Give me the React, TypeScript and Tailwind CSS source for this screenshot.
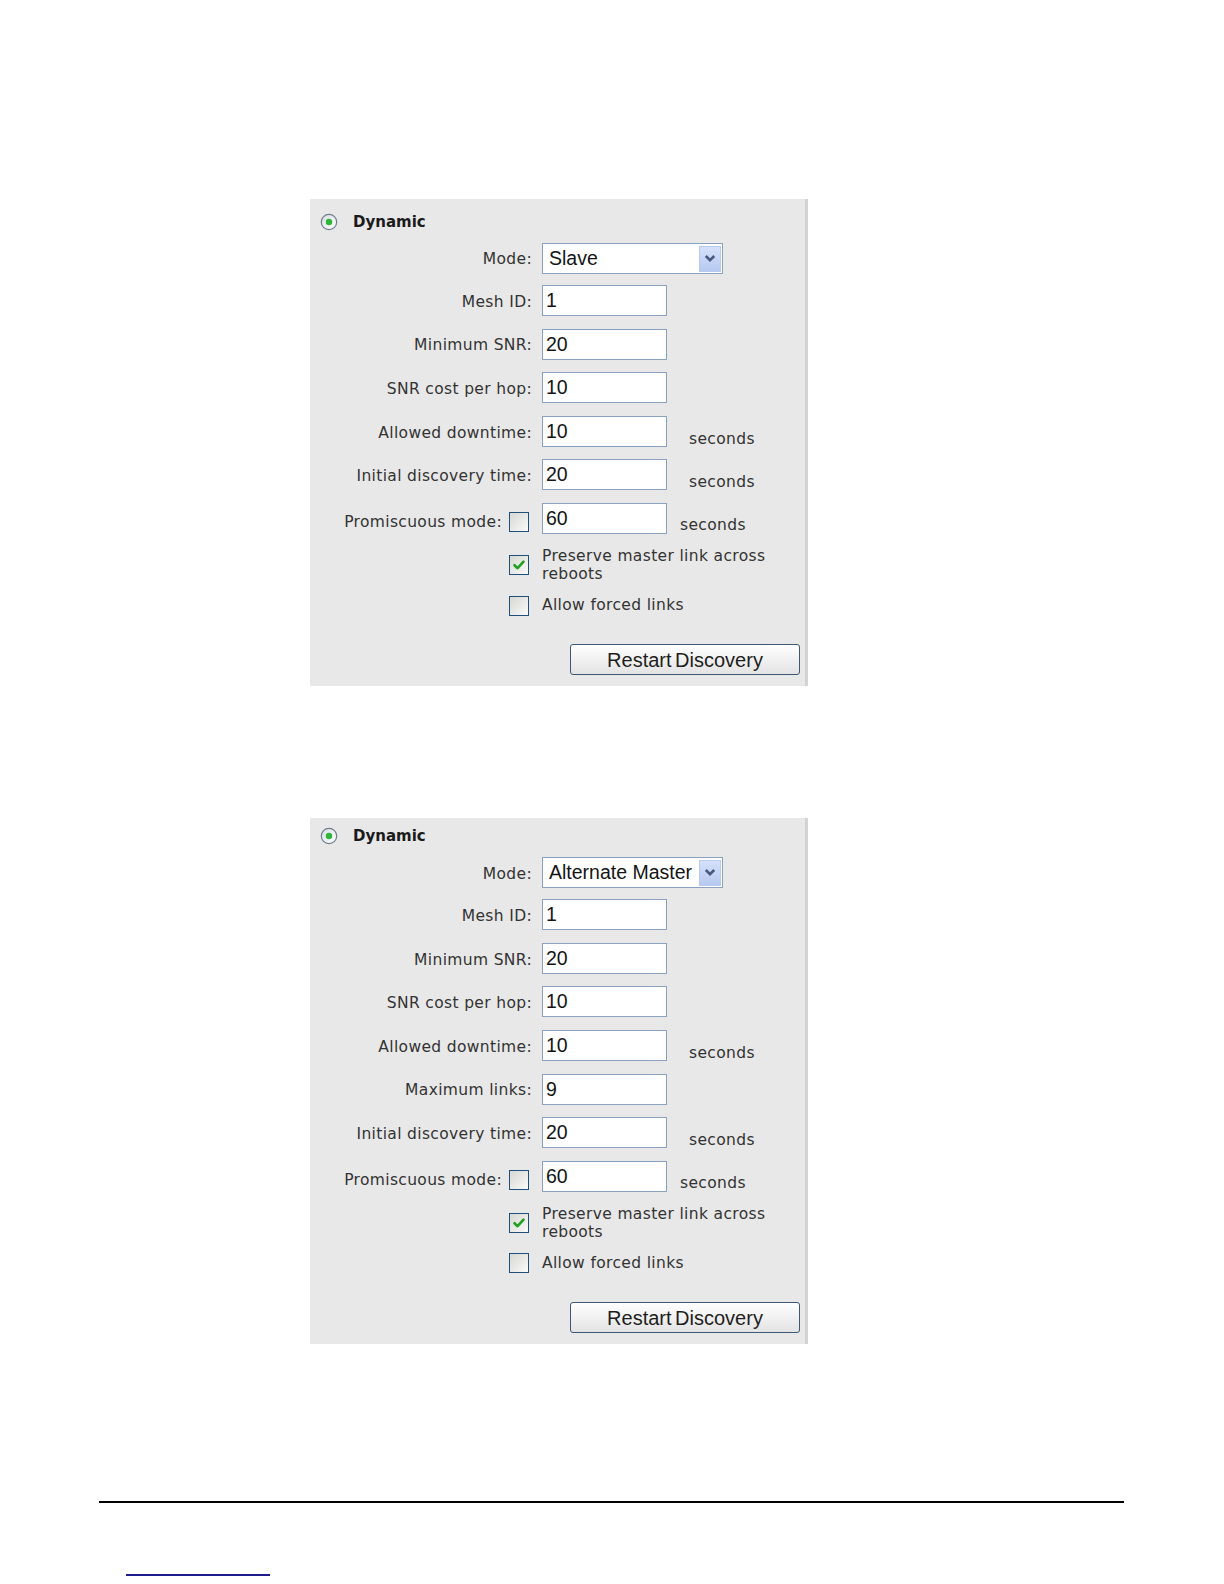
import React from "react";

type Row = { label: string; value: string; suffix?: boolean };

const Radio = () => (
    <svg width="18" height="18" viewBox="0 0 18 18" className="shrink-0">
        <defs>
            <linearGradient id="rg" x1="0" y1="0" x2="1" y2="1">
                <stop offset="0" stopColor="#d9dde2" />
                <stop offset="1" stopColor="#ffffff" />
            </linearGradient>
        </defs>
        <circle cx="9" cy="9" r="7.7" fill="url(#rg)" stroke="#6f7f8f" strokeWidth="1.2" />
        <circle cx="9" cy="9" r="3.2" fill="#2fb53a" />
    </svg>
);

const Checkbox = ({ checked = false }: { checked?: boolean }) => (
    <div className="flex h-[20px] w-[20px] shrink-0 items-center justify-center border-[1.5px] border-[#1f4f7c] bg-linear-to-br from-[#d7d7d2] to-[#fafafa]">
        {checked && (
            <svg width="14" height="14" viewBox="0 0 14 14">
                <path d="M2.5 7.2 L5.6 10.2 L11.5 3.6" fill="none" stroke="#22a024" strokeWidth="2.6" strokeLinecap="round" strokeLinejoin="round" />
            </svg>
        )}
    </div>
);

const Label = ({ children }: { children: React.ReactNode }) => (
    <span className="whitespace-nowrap font-['DejaVu_Sans',Verdana,sans-serif] text-[15.5px] tracking-[0.35px] text-[#333333]">{children}</span>
);

const TextBox = ({ value }: { value: string }) => (
    <input
        readOnly
        value={value}
        className="h-[31px] w-[125px] border-[1.5px] border-[#8aa2bf] bg-white px-[3px] font-['Liberation_Sans',Arial,sans-serif] text-[19.5px] text-[#141414] outline-none"
    />
);

const Panel = ({ mode, rows, top, head }: { mode: string; rows: Row[]; top: string; head: string }) => (
    <div className={`ml-[310px] w-[498px] border-r-[3px] border-[#d3d3d3] bg-[#e8e8e8] pr-[5px] pb-[11px] ${top}`}>
        <div className="flex h-[20px] items-center gap-[15px] pl-[10px]">
            <Radio />
            <span className="font-['DejaVu_Sans',Verdana,sans-serif] text-[15px] font-bold text-[#1a1a1a]">Dynamic</span>
        </div>

        <div className={`flex h-[31px] items-center ${head}`}>
            <div className="flex w-[232px] justify-end pt-[3px] pr-[10px]">
                <Label>Mode:</Label>
            </div>
            <div className="flex h-[31px] w-[181px] items-center border-[1.5px] border-[#8aa2bf] bg-white pl-[6px]">
                <span className="flex-1 font-['Liberation_Sans',Arial,sans-serif] text-[19.5px] text-[#141414]">{mode}</span>
                <div className="mr-[1px] flex h-[26px] w-[22px] items-center justify-center border border-[#b8caee] bg-linear-to-b from-[#d5e1fb] to-[#b7c9f0]">
                    <svg width="12" height="9" viewBox="0 0 12 9">
                        <path d="M1.8 2 L6 6.2 L10.2 2" fill="none" stroke="#46597f" strokeWidth="2.6" />
                    </svg>
                </div>
            </div>
        </div>

        <div className="mt-[11px] flex flex-col gap-[12.6px]">
            {rows.map((r) => (
                <div key={r.label} className="flex h-[31px] items-center">
                    <div className="flex w-[232px] justify-end pt-[4px] pr-[10px]">
                        <Label>{r.label}</Label>
                    </div>
                    <TextBox value={r.value} />
                    {r.suffix && (
                        <span className="ml-[22px] mt-[14px]">
                            <Label>seconds</Label>
                        </span>
                    )}
                </div>
            ))}

            <div className="flex h-[31px] items-center">
                <div className="flex w-[232px] items-center justify-end pt-[8px] pr-[13px]">
                    <Label>Promiscuous mode:</Label>
                    <div className="ml-[7px]">
                        <Checkbox />
                    </div>
                </div>
                <TextBox value="60" />
                <span className="ml-[13px] mt-[13px]">
                    <Label>seconds</Label>
                </span>
            </div>
        </div>

        <div className="mt-[13px] flex items-center">
            <div className="flex w-[232px] justify-end pr-[13px]">
                <Checkbox checked />
            </div>
            <div className="font-['DejaVu_Sans',Verdana,sans-serif] text-[15.5px] leading-[18px] tracking-[0.35px] text-[#333333]">
                Preserve master link across
                <br />
                reboots
            </div>
        </div>

        <div className="mt-[11px] flex items-center">
            <div className="flex w-[232px] justify-end pr-[13px]">
                <Checkbox />
            </div>
            <Label>Allow forced links</Label>
        </div>

        <div className="mt-[27px] flex justify-end">
            <button className="h-[31px] w-[230px] rounded-[3px] border-[1.5px] border-[#3e5874] bg-linear-to-b from-[#ffffff] to-[#e3e3e3] font-['Liberation_Sans',Arial,sans-serif] text-[20px] text-[#1e1e1e] [word-spacing:-2px]">
                Restart Discovery
            </button>
        </div>
    </div>
);

const App = () => {
    const first: Row[] = [
        { label: "Mesh ID:", value: "1" },
        { label: "Minimum SNR:", value: "20" },
        { label: "SNR cost per hop:", value: "10" },
        { label: "Allowed downtime:", value: "10", suffix: true },
        { label: "Initial discovery time:", value: "20", suffix: true },
    ];
    const second: Row[] = [
        { label: "Mesh ID:", value: "1" },
        { label: "Minimum SNR:", value: "20" },
        { label: "SNR cost per hop:", value: "10" },
        { label: "Allowed downtime:", value: "10", suffix: true },
        { label: "Maximum links:", value: "9" },
        { label: "Initial discovery time:", value: "20", suffix: true },
    ];

    return (
        <div className="flex h-[1584px] w-[1224px] flex-col bg-white">
            <div className="pt-[199px]">
                <Panel mode="Slave" rows={first} top="pt-[13px]" head="mt-[11px]" />
            </div>
            <div className="pt-[132px]">
                <Panel mode="Alternate Master" rows={second} top="pt-[8px]" head="mt-[11px]" />
            </div>

            <div className="ml-[99px] mt-[157px] h-[2px] w-[1025px] bg-black" />
            <div className="ml-[126px] mt-[71px] h-[2px] w-[144px] bg-[#1c1c8a]" />
        </div>
    );
};

export default App;
